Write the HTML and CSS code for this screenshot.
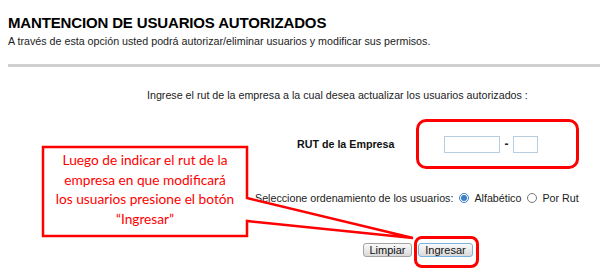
FILE: index.html
```html
<!DOCTYPE html>
<html lang="es">
<head>
	<meta charset="UTF-8">
	<title>Mantención de usuarios autorizados</title>
	<link rel="stylesheet" href="styles.css">
</head>
<body>
	<div class="page">
		<div class="header">
			<h1>MANTENCION DE USUARIOS AUTORIZADOS</h1>
			<p>A través de esta opción usted podrá autorizar/eliminar usuarios y modificar sus permisos.</p>
		</div>
		<div class="divider"></div>
		<p class="intro">Ingrese el rut de la empresa a la cual desea actualizar los usuarios autorizados :</p>
		<div class="rut-row">
			<span class="rut-label">RUT de la Empresa</span>
			<div class="rut-fields">
				<input type="text" class="rut-num">
				<span class="dash">-</span>
				<input type="text" class="rut-dv">
			</div>
		</div>
		<div class="order-row">
			<span>Seleccione ordenamiento de los usuarios:</span>
			<label class="opt"><input type="radio" name="orden" checked> Alfabético</label>
			<label class="opt"><input type="radio" name="orden"> Por Rut</label>
		</div>
		<div class="actions">
			<button class="btn btn-clear">Limpiar</button>
			<span class="btn-mark"><button class="btn btn-focus">Ingresar</button></span>
		</div>

		<!-- nota explicativa -->
		<svg class="callout-shape" width="600" height="277" viewBox="0 0 600 277">
			<path d="M43 147 L247 147 L247 198 L413 238 L247 221 L247 236 L43 236 Z" fill="#fff" stroke="#f00" stroke-width="2.5"/>
		</svg>
		<div class="callout-text">
			Luego de indicar el rut de la<br>
			empresa en que modificará<br>
			los usuarios presione el botón<br>
			“Ingresar”
		</div>
	</div>
</body>
</html>
```

FILE: styles.css
```css
body {
	margin: 0;
	font-family: "Liberation Sans", Arial, sans-serif;
	color: #222;
	background-color: #fff;
}
.page {
	position: relative;
	width: 600px;
	height: 277px;
	overflow: hidden;
}
.header {
	padding: 13px 0 0 8px;
}
.header h1 {
	margin: 0;
	font-size: 15px;
	letter-spacing: -0.15px;
	color: #000;
	line-height: 20px;
}
.header p {
	margin: 2px 0 0;
	font-size: 10.7px;
	line-height: 13px;
}
.divider {
	margin: 16px 0 0 8px;
	height: 3px;
	background-color: #cfcfcf;
}
.intro {
	margin: 22px 0 0 147px;
	font-size: 10.7px;
}
.rut-row {
	display: flex;
	align-items: center;
	margin-top: 18px;
}
.rut-label {
	margin-left: 297px;
	width: 119px;
	font-size: 10.7px;
	font-weight: bold;
	color: #111;
}
.rut-fields {
	display: flex;
	align-items: center;
	padding-left: 25px;
	box-sizing: border-box;
	width: 163px;
	height: 50px;
	border: 3px solid #f00;
	border-radius: 10px;
}
.rut-fields input {
	height: 17px;
	box-sizing: border-box;
	border: 1px solid #b9cde0;
	padding: 0 2px;
	font-size: 11px;
}
.rut-num {
	width: 56px;
}
.rut-dv {
	width: 25px;
}
.dash {
	width: 13px;
	text-align: center;
	font-size: 12px;
	font-weight: bold;
}
.order-row {
	display: flex;
	align-items: center;
	margin: 23px 0 0 255px;
	font-size: 10.7px;
	gap: 4px;
}
.opt {
	display: flex;
	align-items: center;
	gap: 5px;
}
.opt input {
	width: 10px;
	height: 10px;
	margin: 0 0 0 2px;
	accent-color: #3a80c6;
}
.actions {
	display: flex;
	align-items: flex-start;
	margin: 39px 0 0 363px;
}
.btn {
	height: 14px;
	padding: 0;
	font-family: "Liberation Sans", Arial, sans-serif;
	font-size: 11px;
	color: #111;
	background: linear-gradient(#fafafa, #d9d9d9);
	border: 1px solid #a3a3a3;
	border-radius: 3px;
	line-height: 12px;
}
.btn-clear {
	width: 49px;
}
.btn-mark {
	margin-left: 2px;
	margin-top: -7px;
	padding: 4px 3px 8px 1px;
	border: 3px solid #f00;
	border-radius: 8px;
}
.btn-focus {
	display: block;
	width: 55px;
	border-color: #76b3de;
}
.callout-shape {
	position: absolute;
	left: 0;
	top: 0;
}
.callout-text {
	position: absolute;
	left: 44px;
	top: 150px;
	width: 202px;
	text-align: center;
	font-family: Lato, "Open Sans", sans-serif;
	font-size: 13.7px;
	line-height: 19.5px;
	color: #f00;
}
```
